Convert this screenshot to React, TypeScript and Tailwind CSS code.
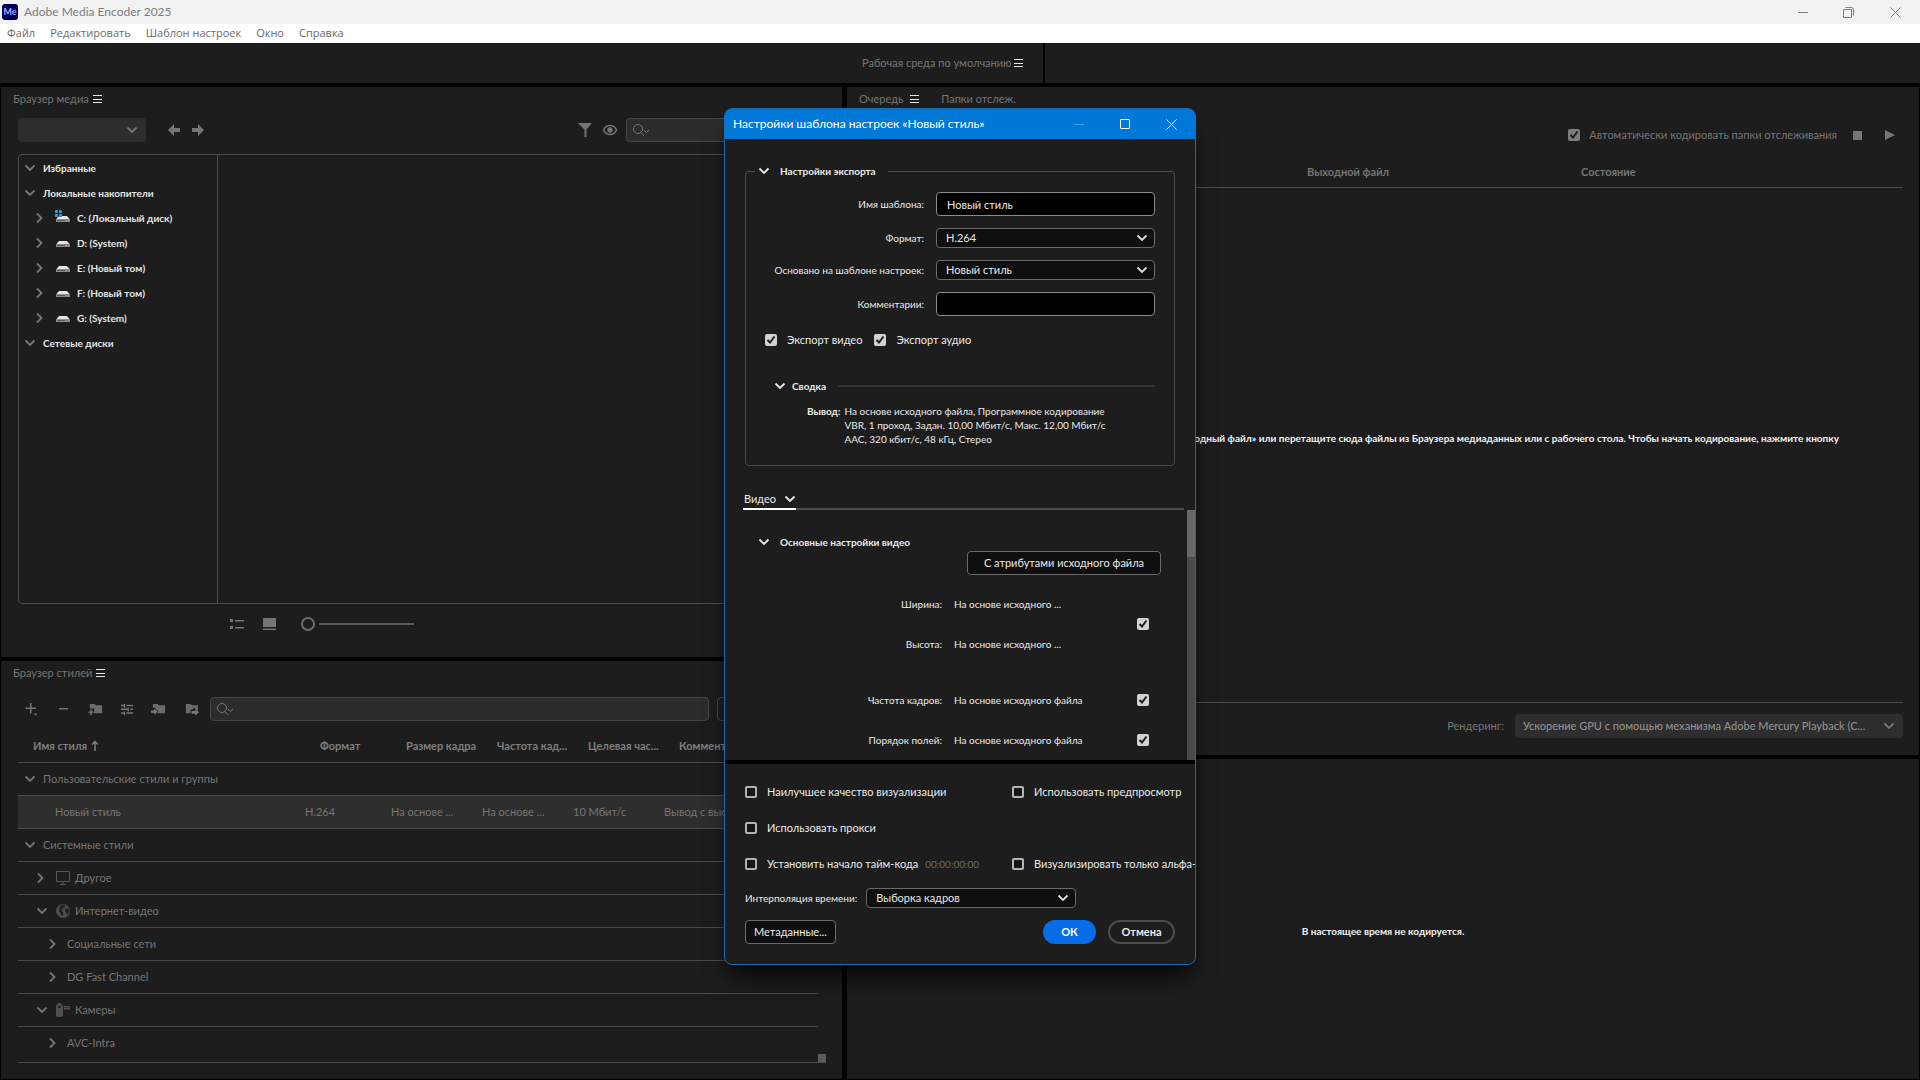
import { ReactNode } from 'react';

const drives = [
  { name: 'C: (Локальный диск)', system: true },
  { name: 'D: (System)' },
  { name: 'E: (Новый том)' },
  { name: 'F: (Новый том)' },
  { name: 'G: (System)' },
];

const presetRows = [
  { name: 'Системные стили', open: true, level: 0 },
  { name: 'Другое', open: false, level: 1, icon: 'monitor' },
  { name: 'Интернет-видео', open: true, level: 1, icon: 'globe' },
  { name: 'Социальные сети', open: false, level: 2 },
  { name: 'DG Fast Channel', open: false, level: 2 },
  { name: 'Камеры', open: true, level: 1, icon: 'camera' },
  { name: 'AVC-Intra', open: false, level: 2 },
];

const levelPadding = ['pl-[6px]', 'pl-[18px]', 'pl-[30px]'];

function ChevronDown({ className = '' }: { className?: string }) {
  return (
    <svg className={`w-3 h-3 shrink-0 ${className}`} viewBox="0 0 12 12" fill="none" stroke="currentColor" strokeWidth={1.8}>
      <path d="M1.5 3.5 6 8l4.5-4.5" />
    </svg>
  );
}

function ChevronRight({ className = '' }: { className?: string }) {
  return (
    <svg className={`w-3 h-3 shrink-0 ${className}`} viewBox="0 0 12 12" fill="none" stroke="currentColor" strokeWidth={1.8}>
      <path d="M2 1.5 6.500 6 2 10.500" />
    </svg>
  );
}

function PanelMenu({ label }: { label: string }) {
  return (
    <button aria-label={label} className="text-gray-200">
      <svg className="w-[9px] h-3" viewBox="0 0 9 12" fill="currentColor">
        <path d="M0 2h9v1H0zM0 6h9v1H0zM0 9h9v1H0z" />
      </svg>
    </button>
  );
}

function DriveIcon({ system }: { system?: boolean }) {
  return (
    <svg className="w-4 h-4 shrink-0" viewBox="0 0 16 16">
      <path d="M4 6h8l2.500 3h-13z" fill="#e6e6e6" />
      <path d="M1 9h14v3H1z" fill="#8b8b8b" />
      <path d="M2 10h8v1H2z" fill="#5a5a5a" />
      {system && (
        <>
          <path d="M0 0h7v6.500H0z" fill="#1d1d1d" />
          <path d="M0 0h3v3H0zM4 0h3v3H4zM0 4h3v3H0zM4 4h3v3H4z" fill="#2f8fd8" />
        </>
      )}
    </svg>
  );
}

function SearchIcon() {
  return (
    <svg className="w-5 h-4 shrink-0" viewBox="0 0 20 16" fill="none" stroke="currentColor">
      <circle cx="6" cy="7" r="4.500" />
      <path d="m9 10.500 3 3.500M12 8l2.500 2.500L17 8" />
    </svg>
  );
}

function CategoryIcon({ type }: { type: string }) {
  if (type === 'monitor') {
    return (
      <svg className="w-4 h-4 shrink-0" viewBox="0 0 16 16" fill="none" stroke="#565656">
        <path d="M1.500 1.500h13v10h-13zM8 12v2M5 14.500h6" />
      </svg>
    );
  }
  if (type === 'globe') {
    return (
      <svg className="w-4 h-4 shrink-0" viewBox="0 0 16 16">
        <circle cx="8" cy="8" r="7" fill="#4c4c4c" />
        <path d="M6 2 9.500 1.500 10 4 7.500 5.500 7 8l1.500 2-1 3.500L5.500 10.500 4 8l.5-3.500zM11 5l2.500.5 1 3-2 3.500L11 9.500 10 7z" fill="#222222" />
      </svg>
    );
  }
  return (
    <svg className="w-4 h-4 shrink-0" viewBox="0 0 16 16" fill="#505050">
      <path d="M1 4 3.500 1h2L8 4v10l-2 1H3l-2-1z" />
      <circle cx="4.500" cy="5" r="1.300" fill="#1d1d1d" />
      <path d="M9 4h6v1.500H9zM9 6h6v1.500H9z" />
    </svg>
  );
}

function FolderIcon({ type }: { type: 'add' | 'in' | 'out' }) {
  return (
    <svg className="w-[15px] h-[15px]" viewBox="0 0 16 16">
      <path d="M2 2h5l1.500 1.500H15V12H2z" fill="#6b6b6b" />
      {type === 'add' && (
        <>
          <path d="M0 7h6.500v8H0z" fill="#1d1d1d" />
          <path d="M2.500 8h1.500v2h2v1.500H4v2.500H2.500v-2.500h-2V10h2z" fill="#7a7a7a" />
        </>
      )}
      {type === 'in' && (
        <>
          <path d="M0 6h4l4 4-4 4.500H0z" fill="#1d1d1d" />
          <path d="M0 9h3.500V7L7 10.200 3.500 13.500v-2H0z" fill="#7a7a7a" />
        </>
      )}
      {type === 'out' && (
        <>
          <path d="M7 8h3V5.500L16 10v4h-6l-3-1z" fill="#1d1d1d" />
          <path d="M8 9.500h4v-2l4 3.500-4 3.500v-2H8z" fill="#7a7a7a" />
        </>
      )}
    </svg>
  );
}

function Check({ label, checked, dim, className = '' }: { label: string; checked?: boolean; dim?: boolean; className?: string }) {
  const box = dim ? 'bg-[#7c7c7c]' : checked ? 'bg-[#d2d2d2]' : 'border-2 border-[#b4b4b4] bg-[#161616]';
  return (
    <span className={`grid shrink-0 ${className}`}>
      <input type="checkbox" aria-label={label} defaultChecked={checked} className={`peer col-start-1 row-start-1 appearance-none w-3 h-3 rounded-xs ${box}`} />
      <svg className="col-start-1 row-start-1 hidden peer-checked:block w-3 h-3 pointer-events-none" viewBox="0 0 12 12" fill="none" stroke="#1d1d1d" strokeWidth={2}>
        <path d="m2.500 6 2.500 2.500 4.500-6" />
      </svg>
    </span>
  );
}

function CheckRow({ label, checked }: { label: string; checked?: boolean }) {
  return (
    <label className="flex items-center gap-[10px] whitespace-nowrap">
      <Check label={label} checked={checked} />
      {label}
    </label>
  );
}

function Dropdown({ id, value, label, className = '' }: { id: string; value: string; label?: string; className?: string }) {
  return (
    <div className={`grid items-center ${className}`}>
      <select id={id} aria-label={label} className="col-start-1 row-start-1 w-full h-5 appearance-none rounded border border-[#6a6a6a] bg-[#0f0f0f] pl-[9px] pr-6 text-[11px] text-[#eaeaea]">
        <option>{value}</option>
      </select>
      <ChevronDown className="col-start-1 row-start-1 justify-self-end mr-[7px] pointer-events-none text-[#dddddd]" />
    </div>
  );
}

function Panel({ children, className = '' }: { children: ReactNode; className?: string }) {
  return <section className={`min-h-0 overflow-hidden bg-[#1d1d1d] flex flex-col basis-0 ${className}`}>{children}</section>;
}

function MediaBrowser() {
  return (
    <Panel className="grow-[570]">
      <header className="flex items-center gap-1 h-6 pl-3">
        <h2>Браузер медиа</h2>
        <PanelMenu label="Меню браузера медиа" />
      </header>
      <div className="flex items-center h-6 mt-[7px] pl-[17px] pr-4">
        <div className="grid items-center w-32">
          <select aria-label="Расположение" className="col-start-1 row-start-1 w-full h-6 appearance-none rounded bg-[#2e2e2e]" />
          <ChevronDown className="col-start-1 row-start-1 justify-self-end mr-2 pointer-events-none" />
        </div>
        <button aria-label="Назад" className="ml-[22px]">
          <svg className="w-3 h-4" viewBox="0 0 12 16" fill="currentColor"><path d="M0 8l6-6v4h6v4H6v4z" /></svg>
        </button>
        <button aria-label="Вперёд" className="ml-3">
          <svg className="w-3 h-4" viewBox="0 0 12 16" fill="currentColor"><path d="M12 8L6 2v4H0v4h6v4z" /></svg>
        </button>
        <button aria-label="Фильтр" className="ml-auto">
          <svg className="w-4 h-4" viewBox="0 0 16 16" fill="currentColor"><path d="M1 1h14l-5.500 6.500V15h-2V7.500z" /></svg>
        </button>
        <button aria-label="Показать" className="ml-[9px]">
          <svg className="w-4 h-4" viewBox="0 0 16 16" fill="none" stroke="currentColor" strokeWidth={1.500}>
            <path d="M1.500 8C4 2 12 2 14.500 8 12 14 4 14 1.500 8z" />
            <circle cx="8" cy="8" r="2" fill="currentColor" />
          </svg>
        </button>
        <div className="flex items-center w-[200px] h-6 ml-2 pl-[5px] rounded border border-[#454545] bg-[#2c2c2c]">
          <SearchIcon />
          <input type="text" aria-label="Поиск медиа" className="min-w-0 grow bg-transparent" />
        </div>
      </div>
      <div className="flex grow mt-3 ml-[17px] mr-4 border border-[#4b4b4b] rounded">
        <ul className="w-[199px] border-r border-[#4b4b4b] text-[10px] font-bold text-[#e6e6e6]">
          <li className="flex items-center h-[25px] pl-[5px] gap-[7px]">
            <ChevronDown className="text-[#777777]" />
            Избранные
          </li>
          <li className="flex items-center h-[25px] pl-[5px] gap-[7px]">
            <ChevronDown className="text-[#777777]" />
            Локальные накопители
          </li>
          {drives.map((drive) => (
            <li key={drive.name} className="flex items-center h-[25px] pl-4">
              <ChevronRight className="text-[#777777]" />
              <span className="ml-2 mr-[6px]"><DriveIcon system={drive.system} /></span>
              {drive.name}
            </li>
          ))}
          <li className="flex items-center h-[25px] pl-[5px] gap-[7px]">
            <ChevronDown className="text-[#777777]" />
            Сетевые диски
          </li>
        </ul>
      </div>
      <footer className="flex items-center h-[53px] pb-[13px] pl-[228px]">
        <button aria-label="Список">
          <svg className="w-4 h-4" viewBox="0 0 16 16" fill="currentColor"><path d="M1 3h3v3H1zM6 4h9v1.500H6zM1 10h3v3H1zM6 11h9v1.500H6z" /></svg>
        </button>
        <button aria-label="Миниатюры" className="ml-4">
          <svg className="w-4 h-4" viewBox="0 0 16 16" fill="currentColor"><path d="M2 2h13v9H2zM2 12.500h13V14H2z" /></svg>
        </button>
        <input
          type="range"
          aria-label="Размер миниатюр"
          defaultValue={0}
          className="ml-6 w-[113px] h-4 appearance-none bg-transparent [&::-webkit-slider-runnable-track]:h-[2px] [&::-webkit-slider-runnable-track]:bg-[linear-gradient(to_right,#1d1d1d_18px,#5c5c5c_18px)] [&::-webkit-slider-thumb]:appearance-none [&::-webkit-slider-thumb]:w-[14px] [&::-webkit-slider-thumb]:h-[14px] [&::-webkit-slider-thumb]:-mt-[6px] [&::-webkit-slider-thumb]:rounded-full [&::-webkit-slider-thumb]:border-2 [&::-webkit-slider-thumb]:border-[#6b6b6b] [&::-webkit-slider-thumb]:bg-[#1d1d1d]"
        />
      </footer>
    </Panel>
  );
}

function PresetBrowser() {
  return (
    <Panel className="grow-[418]">
      <header className="flex items-center gap-1 h-6 pl-3">
        <h2>Браузер стилей</h2>
        <PanelMenu label="Меню браузера стилей" />
      </header>
      <div className="flex items-center h-6 mt-3 pl-6">
        <button aria-label="Создать" className="w-[33px]">
          <svg className="w-4 h-4" viewBox="0 0 16 16" fill="currentColor"><path d="M5 2h1.500v4.500H11V8H6.500v4.500H5V8H.5V6.500H5zM8.500 12.500h4l-2 2z" /></svg>
        </button>
        <button aria-label="Удалить" className="w-[30px]">
          <svg className="w-3 h-4" viewBox="0 0 12 16" fill="currentColor"><path d="M1 7h9v1.500H1z" /></svg>
        </button>
        <button aria-label="Создать группу" className="w-8"><FolderIcon type="add" /></button>
        <button aria-label="Настройки стиля" className="w-[31px]">
          <svg className="w-[15px] h-[15px]" viewBox="0 0 16 16" fill="currentColor"><path d="M1 3h3V2h1.500v4H4V4.500H1zM7 3h7v1.500H7zM1 7h7V6h1.500v4H8V8.500H1zM11 7h3v1.500h-3zM1 11h3v-1h1.500v4H4v-1.500H1zM7 11h7v1.500H7z" /></svg>
        </button>
        <button aria-label="Импорт" className="w-[33px]"><FolderIcon type="in" /></button>
        <button aria-label="Экспорт" className="w-[26px]"><FolderIcon type="out" /></button>
        <div className="flex items-center w-[499px] h-6 pl-[5px] rounded border border-[#454545] bg-[#2c2c2c]">
          <SearchIcon />
          <input type="text" aria-label="Поиск стилей" className="min-w-0 grow bg-transparent" />
        </div>
        <button aria-label="Применить стиль" className="grow h-6 ml-2 mr-4 rounded border border-[#454545]" />
      </div>
      <div className="grow mt-[9px] ml-[17px] mr-4 border-b border-[#4b4b4b] flex">
        <table className="grow h-fit table-fixed border-collapse text-left whitespace-nowrap">
          <colgroup>
            <col className="w-[287px]" />
            <col className="w-[86px]" />
            <col className="w-[91px]" />
            <col className="w-[91px]" />
            <col className="w-[91px]" />
            <col />
          </colgroup>
          <thead className="text-[#7e7e7e]">
            <tr className="h-8 border-b border-[#4b4b4b]">
              <th className="pl-[15px] font-bold">
                <span className="flex items-center gap-1">
                  Имя стиля
                  <svg className="w-2 h-3" viewBox="0 0 8 12" fill="none" stroke="currentColor" strokeWidth={1.500}><path d="M4 11V1M1 4.500 4 1.500l3 3" /></svg>
                </span>
              </th>
              <th className="pl-[15px] font-bold">Формат</th>
              <th className="pl-[15px] font-bold">Размер кадра</th>
              <th className="pl-[15px] font-bold">Частота кад...</th>
              <th className="pl-[15px] font-bold">Целевая час...</th>
              <th className="pl-[15px] font-bold">Комментарии</th>
            </tr>
          </thead>
          <tbody>
            <tr className="h-[33px] border-b border-[#4b4b4b]">
              <td colSpan={6} className="pl-[6px]">
                <span className="flex items-center gap-[7px]"><ChevronDown />Пользовательские стили и группы</span>
              </td>
            </tr>
            <tr className="h-[33px] border-b border-[#4b4b4b] bg-[#2e2e2e]">
              <td className="pl-[37px]">Новый стиль</td>
              <td>H.264</td>
              <td>На основе ...</td>
              <td>На основе ...</td>
              <td>10 Мбит/с</td>
              <td>Вывод с высоким</td>
            </tr>
            {presetRows.map((row, i) => (
              <tr key={row.name} className={`h-[33px] ${i < presetRows.length - 1 ? 'border-b border-[#4b4b4b]' : ''}`}>
                <td colSpan={6} className={levelPadding[row.level]}>
                  <span className="flex items-center gap-[7px]">
                    {row.open ? <ChevronDown /> : <ChevronRight />}
                    <span className="flex items-center gap-1">
                      {row.icon && <CategoryIcon type={row.icon} />}
                      {row.name}
                    </span>
                  </span>
                </td>
              </tr>
            ))}
          </tbody>
        </table>
        <div className="w-2 h-2 self-end bg-[#5c5c5c]" />
      </div>
      <div className="h-4 shrink-0" />
    </Panel>
  );
}

function Queue() {
  return (
    <Panel className="grow-[668]">
      <header className="flex items-center h-6 pl-3 gap-[22px]">
        <div className="flex items-center gap-[7px]">
          <h2>Очередь</h2>
          <PanelMenu label="Меню очереди" />
        </div>
        <h2>Папки отслеж.</h2>
      </header>
      <div className="flex items-center justify-end h-6 mt-3 pr-6">
        <label className="flex items-center gap-[9px]">
          <Check label="Автоматически кодировать папки отслеживания" checked dim />
          Автоматически кодировать папки отслеживания
        </label>
        <button aria-label="Остановить очередь" className="ml-4 w-[9px] h-[9px] bg-[#757575]" />
        <button aria-label="Запустить очередь" className="ml-[23px]">
          <svg className="w-[10px] h-3" viewBox="0 0 10 12" fill="currentColor"><path d="M0 1l10 5-10 5z" /></svg>
        </button>
      </div>
      <div className="flex mx-4 mt-3 h-[29px] pt-[5px] border-b border-[#4b4b4b] font-bold">
        <div className="w-[444px]" />
        <div className="w-[274px]">Выходной файл</div>
        <div>Состояние</div>
      </div>
      <div className="grow min-h-0 mx-4 flex items-center justify-end border-b border-[#4b4b4b] text-[10px] text-[#f2f2f2] font-bold">
        <p className="mr-16 mb-[14px] whitespace-nowrap">
          исходный файл» или перетащите сюда файлы из Браузера медиаданных или с рабочего стола. Чтобы начать кодирование, нажмите кнопку
        </p>
      </div>
      <footer className="flex items-start justify-end gap-[11px] h-[52px] pt-[11px] pr-4 shrink-0">
        <label htmlFor="renderer" className="pt-1">Рендеринг:</label>
        <div className="grid items-center w-[388px]">
          <select id="renderer" className="col-start-1 row-start-1 w-full h-6 appearance-none rounded bg-[#2e2e2e] pl-2 pr-8 text-[#8f8f8f] font-medium">
            <option>Ускорение GPU с помощью механизма Adobe Mercury Playback (C...</option>
          </select>
          <ChevronDown className="col-start-1 row-start-1 justify-self-end mr-2 pointer-events-none" />
        </div>
      </footer>
    </Panel>
  );
}

function SourceField({ label, value, className = '' }: { label: string; value: string; className?: string }) {
  return (
    <div className={`flex items-center h-10 ${className}`}>
      <span className="w-[217px] mr-3 text-right">{label}</span>
      <span>{value}</span>
    </div>
  );
}

function PresetDialog() {
  return (
    <div role="dialog" aria-label="Настройки шаблона настроек" className="absolute left-1/2 top-[108px] -translate-x-1/2 w-[472px] rounded-lg overflow-hidden border border-[#1a6cb0] bg-[#1d1d1d] text-[11px] text-[#eaeaea] shadow-xl shadow-black/60">
      <header className="flex items-center h-[30px] pl-2 pr-[18px] bg-[#0078d7] text-white text-xs">
        <h2>Настройки шаблона настроек «Новый стиль»</h2>
        <button aria-label="Свернуть" disabled className="ml-auto w-[10px] h-px bg-[#3f9be6]" />
        <button aria-label="Развернуть" className="ml-9 w-[10px] h-[10px] border border-white rounded-[1px]" />
        <button aria-label="Закрыть" className="ml-9">
          <svg className="w-[11px] h-[11px]" viewBox="0 0 11 11" stroke="white"><path d="M.5.5l10 10M10.500.5l-10 10" /></svg>
        </button>
      </header>

      <fieldset className="mx-5 mt-6 border border-[#4b4b4b] rounded h-[303px] min-w-0">
        <legend className="flex items-center gap-[10px] ml-[9px] px-[3px] pr-3 h-4 text-[10px] font-bold">
          <ChevronDown />
          Настройки экспорта
        </legend>
        <div className="grid grid-cols-[178px_1fr] gap-x-3 gap-y-3 items-center mt-[13px] mr-[19px] text-[10px]">
          <label htmlFor="presetName" className="text-right whitespace-nowrap">Имя шаблона:</label>
          <input id="presetName" type="text" defaultValue="Новый стиль" className="h-6 min-w-0 rounded border border-[#8a8a8a] bg-black px-[10px] text-[11px]" />
          <label htmlFor="format" className="text-right whitespace-nowrap">Формат:</label>
          <Dropdown id="format" value="H.264" />
          <label htmlFor="basedOn" className="text-right whitespace-nowrap">Основано на шаблоне настроек:</label>
          <Dropdown id="basedOn" value="Новый стиль" />
          <label htmlFor="comments" className="text-right whitespace-nowrap">Комментарии:</label>
          <input id="comments" type="text" className="h-6 min-w-0 rounded border border-[#8a8a8a] bg-black px-[10px] text-[11px]" />
        </div>
        <div className="flex gap-3 h-4 mt-4 pl-[19px]">
          <CheckRow label="Экспорт видео" checked />
          <CheckRow label="Экспорт аудио" checked />
        </div>
        <div className="flex items-center mt-[30px] ml-[28px] mr-[19px] h-4 text-[10px] font-bold">
          <ChevronDown className="mr-[6px]" />
          Сводка
          <hr className="grow ml-3 border-t-2 border-[#333333]" />
        </div>
        <div className="flex gap-1 mt-[10px] ml-[61px] text-[10px] leading-[14px]">
          <span className="font-bold">Вывод:</span>
          <p>
            На основе исходного файла, Программное кодирование<br />
            VBR, 1 проход, Задан. 10,00 Мбит/с, Макс. 12,00 Мбит/с<br />
            AAC, 320 кбит/с, 48 кГц, Стерео
          </p>
        </div>
      </fieldset>

      <div className="flex mt-6 ml-[18px] mr-[11px] border-b-2 border-[#4b4b4b]">
        <button className="flex items-center gap-2 h-5 pl-px -mb-[2px] border-b-2 border-white pb-px">
          Видео
          <ChevronDown />
        </button>
      </div>
      <div className="flex h-[250px]">
        <div className="grow pt-6 text-[10px]">
          <h3 className="flex items-center gap-[10px] pl-[33px] h-4 font-bold">
            <ChevronDown />
            Основные настройки видео
          </h3>
          <div className="flex justify-end pt-px pr-[26px]">
            <button className="h-6 w-[194px] rounded border border-[#6a6a6a] bg-[#0f0f0f] text-[11px]">С атрибутами исходного файла</button>
          </div>
          <div className="flex items-center mt-[9px] pr-[38px]">
            <div className="grow">
              <SourceField label="Ширина:" value="На основе исходного ..." />
              <SourceField label="Высота:" value="На основе исходного ..." />
            </div>
            <Check label="Размер как у исходного файла" checked />
          </div>
          <div className="flex items-center mt-4 pr-[38px]">
            <SourceField className="grow" label="Частота кадров:" value="На основе исходного файла" />
            <Check label="Частота кадров как у исходного файла" checked />
          </div>
          <div className="flex items-center pr-[38px]">
            <SourceField className="grow" label="Порядок полей:" value="На основе исходного файла" />
            <Check label="Порядок полей как у исходного файла" checked />
          </div>
        </div>
        <div className="w-2 bg-[#4a4a4a]">
          <div className="h-[47px] bg-[#686868]" />
        </div>
      </div>

      <div className="border-t-4 border-black pt-5 pb-5 pl-5">
        <div className="grid grid-cols-[267px_1fr] gap-y-5">
          <CheckRow label="Наилучшее качество визуализации" />
          <CheckRow label="Использовать предпросмотр" />
          <CheckRow label="Использовать прокси" />
          <span />
          <div className="flex items-center gap-[7px]">
            <CheckRow label="Установить начало тайм-кода" />
            <span className="text-[10px] text-[#6a6a6a]">00:00:00:00</span>
          </div>
          <CheckRow label="Визуализировать только альфа-канал" />
        </div>
        <div className="flex items-center gap-[9px] mt-4 text-[10px]">
          <label htmlFor="interpolation">Интерполяция времени:</label>
          <Dropdown id="interpolation" value="Выборка кадров" className="w-[210px]" />
        </div>
        <div className="flex items-center mt-3 mr-5">
          <button className="h-6 w-[91px] rounded border border-[#6a6a6a] bg-[#0f0f0f]">Метаданные...</button>
          <button className="h-6 w-[53px] ml-auto rounded-full bg-[#066ce7] font-bold text-white">ОК</button>
          <button className="h-6 w-[67px] ml-3 rounded-full border-2 border-[#4b4b4b] font-bold">Отмена</button>
        </div>
      </div>
    </div>
  );
}

export default function App() {
  return (
    <div className="relative h-screen overflow-hidden flex flex-col bg-black text-[11px] leading-4 text-[#757575] font-['Lato','Noto_Sans',sans-serif]">
      <header className="flex items-center h-6 pl-[2px] pr-[19px] bg-[#f2f2f2] text-xs text-[#7d7d7d]">
        <span className="flex items-center justify-center w-4 h-4 rounded-[3px] bg-[#00005b] text-[9px] font-bold text-[#a9a9ff]">Me</span>
        <h1 className="ml-[6px]">Adobe Media Encoder 2025</h1>
        <button aria-label="Свернуть окно" className="ml-auto w-[10px] h-px bg-[#7d7d7d]" />
        <button aria-label="Восстановить окно" className="ml-[35px]">
          <svg className="w-[11px] h-[11px]" viewBox="0 0 11 11" fill="none" stroke="currentColor"><path d="M.5 2.500h8v8h-8zM2.500.5h6a2 2 0 0 1 2 2v6" /></svg>
        </button>
        <button aria-label="Закрыть окно" className="ml-9">
          <svg className="w-[11px] h-[11px]" viewBox="0 0 11 11" stroke="currentColor"><path d="M.5.5l10 10M10.500.5l-10 10" /></svg>
        </button>
      </header>
      <nav className="flex items-center gap-[15px] h-[19px] pl-[7px] pb-px bg-white text-[#6a6a6a] font-['Open_Sans','Noto_Sans',sans-serif]">
        <a href="#file">Файл</a>
        <a href="#edit">Редактировать</a>
        <a href="#preset">Шаблон настроек</a>
        <a href="#window">Окно</a>
        <a href="#help">Справка</a>
      </nav>
      <div className="flex items-center h-10 bg-[#1d1d1d]">
        <div className="flex items-center justify-end gap-[3px] w-[1045px] h-10 pr-5 border-r-2 border-black">
          <span className="w-[149px] overflow-hidden whitespace-nowrap">Рабочая среда по умолчанию</span>
          <PanelMenu label="Меню рабочей среды" />
        </div>
      </div>
      <main className="grow min-h-0 mt-1 px-px pb-px grid grid-cols-[841fr_1072fr] gap-[5px]">
        <div className="flex flex-col gap-1 min-w-0 min-h-0">
          <MediaBrowser />
          <PresetBrowser />
        </div>
        <div className="flex flex-col gap-1 min-w-0 min-h-0">
          <Queue />
          <Panel className="grow-[320] items-center justify-center text-[10px] text-[#f2f2f2] font-bold">
            <p className="mt-6">В настоящее время не кодируется.</p>
          </Panel>
        </div>
      </main>
      <PresetDialog />
    </div>
  );
}
